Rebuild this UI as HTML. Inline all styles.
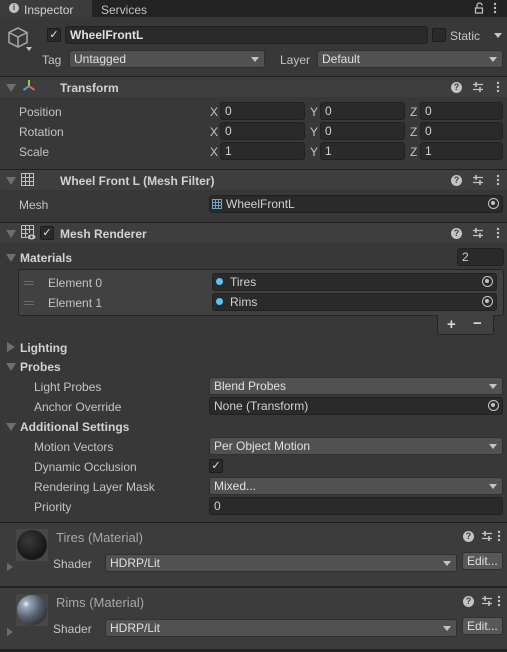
<!DOCTYPE html>
<html><head><meta charset="utf-8"><style>
*{box-sizing:border-box;margin:0;padding:0}
body{width:507px;height:652px;background:#383838;font-family:"Liberation Sans",sans-serif;font-size:12px;color:#c4c4c4;position:relative;overflow:hidden}
.a{position:absolute;white-space:nowrap}
.t{position:absolute;white-space:nowrap;line-height:14px;transform:translateY(-6px)}
.f{position:absolute;background:#2a2a2a;border:1px solid #212121;border-radius:3px;height:18px;line-height:17px;padding-left:4px;color:#d2d2d2}
.d{position:absolute;background:#515151;border:1px solid #303030;border-radius:3px;height:18px;line-height:17px;padding-left:4px;color:#e0e0e0}
.d:after{content:"";position:absolute;right:5px;top:6px;border-left:4px solid transparent;border-right:4px solid transparent;border-top:5px solid #c4c4c4}
.hd{position:absolute;left:0;width:507px;height:21px;background:#3e3e3e;border-top:1px solid #1f1f1f}
.b{font-weight:bold;color:#d2d2d2}
.tri{position:absolute;width:0;height:0;border-left:5px solid transparent;border-right:5px solid transparent;border-top:8px solid #6e6e6e}
.trr{position:absolute;width:0;height:0;border-top:5px solid transparent;border-bottom:5px solid transparent;border-left:8px solid #6e6e6e}
.cb{position:absolute;width:14px;height:14px;background:#2a2a2a;border:1px solid #1c1c1c;border-radius:2px;color:#e6e6e6;font-size:11px;line-height:12px;text-align:center}
.tg{position:absolute;width:11px;height:11px;border:1.5px solid #c4c4c4;border-radius:50%}
.tg:after{content:"";position:absolute;left:2px;top:2px;width:4px;height:4px;background:#c4c4c4;border-radius:50%}
.q{position:absolute;width:11px;height:11px;border-radius:50%;background:#c4c4c4;color:#3e3e3e;font-size:9px;font-weight:bold;text-align:center;line-height:11px}
</style></head><body>
<svg width="0" height="0" style="position:absolute"><defs><g id="sl"><path d="M1 3.5H11 M1 8.5H11" stroke="#c4c4c4" stroke-width="1.2"/><path d="M4 1V6 M8 6V11" stroke="#c4c4c4" stroke-width="1.6"/></g><g id="dt"><circle cx="2" cy="2" r="1.2" fill="#c4c4c4"/><circle cx="2" cy="6" r="1.2" fill="#c4c4c4"/><circle cx="2" cy="10" r="1.2" fill="#c4c4c4"/></g></defs></svg>
<!-- tab bar -->
<div class="a" style="left:0;top:0;width:507px;height:17px;background:#232323"></div>
<div class="a" style="left:0;top:0;width:92px;height:17px;background:#3c3c3c"></div>
<div class="a" style="left:9px;top:3px;width:10px;height:10px;border-radius:50%;background:#c4c4c4;color:#3c3c3c;font-size:8px;font-weight:bold;text-align:center;line-height:10px">i</div>
<div class="t" style="left:24px;top:9px;color:#d2d2d2">Inspector</div>
<div class="t" style="left:101px;top:9px">Services</div>
<svg class="a" style="left:474px;top:2px" width="10" height="12"><path d="M3 6V3.5A2.5 2.5 0 0 1 8 3.5" fill="none" stroke="#c4c4c4" stroke-width="1.2"/><rect x="1.5" y="6" width="7" height="5" fill="none" stroke="#c4c4c4" stroke-width="1.2"/></svg>
<svg class="a" style="left:493px;top:2px" width="4" height="12"><use href="#dt"/></svg>
<!-- header -->
<svg class="a" style="left:7px;top:26px" width="22" height="24" viewBox="0 0 22 24"><path d="M11 2 L20 6.5 L20 16.5 L11 21 L2 16.5 L2 6.5 Z M2 6.5 L11 11 L20 6.5 M11 11 L11 21" fill="none" stroke="#a8a8a8" stroke-width="1.5"/></svg>
<div class="a" style="left:26px;top:47px;border-left:3px solid transparent;border-right:3px solid transparent;border-top:4px solid #c4c4c4"></div>
<div class="cb" style="left:47px;top:28px">✓</div>
<div class="f" style="left:65px;top:26px;width:363px;font-weight:bold;color:#e0e0e0">WheelFrontL</div>
<div class="cb" style="left:432px;top:28px"></div>
<div class="t" style="left:450px;top:35px">Static</div>
<div class="a" style="left:494px;top:33px;border-left:4px solid transparent;border-right:4px solid transparent;border-top:5px solid #c4c4c4"></div>
<div class="t" style="left:42px;top:59px">Tag</div>
<div class="d" style="left:69px;top:50px;width:196px">Untagged</div>
<div class="t" style="left:280px;top:59px">Layer</div>
<div class="d" style="left:317px;top:50px;width:186px">Default</div>
<!-- Transform -->
<div class="hd" style="top:76px"></div>
<div class="tri" style="left:6px;top:84px"></div>
<svg class="a" style="left:22px;top:79px" width="14" height="14"><path d="M7 7 L7 1" stroke="#8fd14f" stroke-width="2"/><path d="M7 7 L1.5 11" stroke="#4aa6e8" stroke-width="2"/><path d="M7 7 L12.5 11" stroke="#f0623d" stroke-width="2"/></svg>
<div class="t b" style="left:60px;top:87px">Transform</div>
<div class="q" style="left:451px;top:82px">?</div>
<svg class="a" style="left:472px;top:81px" width="12" height="12"><use href="#sl"/></svg>
<svg class="a" style="left:496px;top:81px" width="4" height="12"><use href="#dt"/></svg>
<div class="t" style="left:19px;top:111px">Position</div>
<div class="t" style="left:19px;top:131px">Rotation</div>
<div class="t" style="left:19px;top:151px">Scale</div>
<div class="t" style="left:210px;top:111px">X</div><div class="f" style="left:220px;top:102px;width:85px">0</div>
<div class="t" style="left:310px;top:111px">Y</div><div class="f" style="left:320px;top:102px;width:85px">0</div>
<div class="t" style="left:410px;top:111px">Z</div><div class="f" style="left:420px;top:102px;width:83px">0</div>
<div class="t" style="left:210px;top:131px">X</div><div class="f" style="left:220px;top:122px;width:85px">0</div>
<div class="t" style="left:310px;top:131px">Y</div><div class="f" style="left:320px;top:122px;width:85px">0</div>
<div class="t" style="left:410px;top:131px">Z</div><div class="f" style="left:420px;top:122px;width:83px">0</div>
<div class="t" style="left:210px;top:151px">X</div><div class="f" style="left:220px;top:142px;width:85px">1</div>
<div class="t" style="left:310px;top:151px">Y</div><div class="f" style="left:320px;top:142px;width:85px">1</div>
<div class="t" style="left:410px;top:151px">Z</div><div class="f" style="left:420px;top:142px;width:83px">1</div>
<!-- Mesh filter -->
<div class="hd" style="top:169px"></div>
<div class="tri" style="left:6px;top:177px"></div>
<svg class="a" style="left:21px;top:173px" width="13" height="13"><path d="M0.5 0.5H12.5V12.5H0.5Z M4.5 0.5V12.5 M8.5 0.5V12.5 M0.5 4.5H12.5 M0.5 8.5H12.5" fill="none" stroke="#8fcfef" stroke-width="1"/></svg>
<div class="t b" style="left:60px;top:180px">Wheel Front L (Mesh Filter)</div>
<div class="q" style="left:451px;top:175px">?</div>
<svg class="a" style="left:472px;top:174px" width="12" height="12"><use href="#sl"/></svg>
<svg class="a" style="left:496px;top:174px" width="4" height="12"><use href="#dt"/></svg>
<div class="t" style="left:19px;top:204px">Mesh</div>
<div class="f" style="left:209px;top:195px;width:294px;padding-left:16px">WheelFrontL</div>
<svg class="a" style="left:212px;top:199px" width="10" height="10"><path d="M0.5 0.5H9.5V9.5H0.5Z M3.5 0.5V9.5 M6.5 0.5V9.5 M0.5 3.5H9.5 M0.5 6.5H9.5" fill="none" stroke="#6fa0c0" stroke-width="1"/></svg>
<div class="tg" style="left:488px;top:198px"></div>
<!-- Mesh renderer -->
<div class="hd" style="top:222px"></div>
<div class="tri" style="left:6px;top:230px"></div>
<svg class="a" style="left:21px;top:225px" width="15" height="15"><path d="M0.5 0.5H12.5V10 M0.5 0.5V12.5H6 M4.5 0.5V12.5 M8.5 0.5V8 M0.5 4.5H12.5 M0.5 8.5H7" fill="none" stroke="#8fcfef" stroke-width="1"/><ellipse cx="10.5" cy="12" rx="4" ry="2.5" fill="#c4c4c4"/><circle cx="10.5" cy="12" r="1.2" fill="#3e3e3e"/></svg>
<div class="cb" style="left:40px;top:226px">✓</div>
<div class="t b" style="left:60px;top:233px">Mesh Renderer</div>
<div class="q" style="left:451px;top:228px">?</div>
<svg class="a" style="left:472px;top:227px" width="12" height="12"><use href="#sl"/></svg>
<svg class="a" style="left:496px;top:227px" width="4" height="12"><use href="#dt"/></svg>
<div class="tri" style="left:6px;top:254px"></div>
<div class="t b" style="left:20px;top:257px">Materials</div>
<div class="f" style="left:457px;top:248px;width:47px">2</div>
<div class="a" style="left:18px;top:269px;width:486px;height:47px;background:#414141;border:1px solid #242424;border-radius:3px"></div>
<div class="a" style="left:24px;top:281px;width:10px;height:4px;border-top:1px solid #6a6a6a;border-bottom:1px solid #6a6a6a"></div>
<div class="a" style="left:24px;top:301px;width:10px;height:4px;border-top:1px solid #6a6a6a;border-bottom:1px solid #6a6a6a"></div>
<div class="t" style="left:48px;top:282px">Element 0</div>
<div class="t" style="left:48px;top:302px">Element 1</div>
<div class="f" style="left:212px;top:273px;width:285px;padding-left:17px">Tires</div>
<div class="f" style="left:212px;top:293px;width:285px;padding-left:17px">Rims</div>
<div class="a" style="left:216px;top:278px;width:7px;height:7px;border-radius:50%;background:#5fc2f5"></div>
<div class="a" style="left:216px;top:298px;width:7px;height:7px;border-radius:50%;background:#5fc2f5"></div>
<div class="tg" style="left:482px;top:276px"></div>
<div class="tg" style="left:482px;top:296px"></div>
<div class="a" style="left:437px;top:315px;width:57px;height:20px;background:#414141;border:1px solid #242424;border-top:none;border-radius:0 0 3px 3px"></div>
<div class="t b" style="left:447px;top:324px;font-size:15px;color:#d8d8d8">+</div>
<div class="t b" style="left:473px;top:323px;font-size:15px;color:#d8d8d8">−</div>
<div class="trr" style="left:7px;top:342px"></div>
<div class="t b" style="left:20px;top:347px">Lighting</div>
<div class="tri" style="left:6px;top:363px"></div>
<div class="t b" style="left:20px;top:366px">Probes</div>
<div class="t" style="left:34px;top:386px">Light Probes</div>
<div class="d" style="left:209px;top:377px;width:294px">Blend Probes</div>
<div class="t" style="left:34px;top:406px">Anchor Override</div>
<div class="f" style="left:209px;top:397px;width:294px">None (Transform)</div>
<div class="tg" style="left:488px;top:400px"></div>
<div class="tri" style="left:6px;top:423px"></div>
<div class="t b" style="left:20px;top:426px">Additional Settings</div>
<div class="t" style="left:34px;top:446px">Motion Vectors</div>
<div class="d" style="left:209px;top:437px;width:294px">Per Object Motion</div>
<div class="t" style="left:34px;top:466px">Dynamic Occlusion</div>
<div class="cb" style="left:209px;top:459px">✓</div>
<div class="t" style="left:34px;top:486px">Rendering Layer Mask</div>
<div class="d" style="left:209px;top:477px;width:294px">Mixed...</div>
<div class="t" style="left:34px;top:506px">Priority</div>
<div class="f" style="left:209px;top:497px;width:294px">0</div>
<!-- materials -->
<div class="a" style="left:0;top:522px;width:507px;height:1px;background:#1f1f1f"></div>
<div class="a" style="left:0;top:523px;width:507px;height:63px;background:#3c3c3c"></div>
<div class="a" style="left:16px;top:529px;width:32px;height:32px;background:#474747"></div>
<div class="a" style="left:17px;top:530px;width:30px;height:30px;border-radius:50%;background:radial-gradient(circle at 40% 35%,#3a3a3a,#151515 70%)"></div>
<div class="t" style="left:56px;top:537px;font-size:13px;color:#a8a8a8">Tires (Material)</div>
<div class="a" style="left:7px;top:563px;border-top:4px solid transparent;border-bottom:4px solid transparent;border-left:6px solid #6e6e6e"></div>
<div class="t" style="left:53px;top:563px">Shader</div>
<div class="d" style="left:105px;top:554px;width:352px">HDRP/Lit</div>
<div class="a" style="left:462px;top:552px;width:41px;height:18px;background:#585858;border:1px solid #303030;border-radius:3px;line-height:17px;padding-left:4px;color:#e0e0e0">Edit...</div>
<div class="q" style="left:463px;top:531px">?</div>
<svg class="a" style="left:481px;top:530px" width="12" height="12"><use href="#sl"/></svg>
<svg class="a" style="left:497px;top:530px" width="4" height="12"><use href="#dt"/></svg>
<div class="a" style="left:0;top:586px;width:507px;height:2px;background:#232323"></div>
<div class="a" style="left:0;top:588px;width:507px;height:64px;background:#3c3c3c"></div>
<div class="a" style="left:16px;top:594px;width:32px;height:32px;background:#474747"></div>
<div class="a" style="left:17px;top:595px;width:30px;height:30px;border-radius:50%;background:radial-gradient(circle at 30% 30%,#f0f0f0 0,#9aa8bc 12%,#5a6270 45%,#2c3038 80%)"></div>
<div class="t" style="left:56px;top:602px;font-size:13px;color:#a8a8a8">Rims (Material)</div>
<div class="a" style="left:7px;top:628px;border-top:4px solid transparent;border-bottom:4px solid transparent;border-left:6px solid #6e6e6e"></div>
<div class="t" style="left:53px;top:628px">Shader</div>
<div class="d" style="left:105px;top:619px;width:352px">HDRP/Lit</div>
<div class="a" style="left:462px;top:617px;width:41px;height:18px;background:#585858;border:1px solid #303030;border-radius:3px;line-height:17px;padding-left:4px;color:#e0e0e0">Edit...</div>
<div class="q" style="left:463px;top:596px">?</div>
<svg class="a" style="left:481px;top:595px" width="12" height="12"><use href="#sl"/></svg>
<svg class="a" style="left:497px;top:595px" width="4" height="12"><use href="#dt"/></svg>
<div class="a" style="left:0;top:649px;width:507px;height:3px;background:#232323"></div>
</body></html>
